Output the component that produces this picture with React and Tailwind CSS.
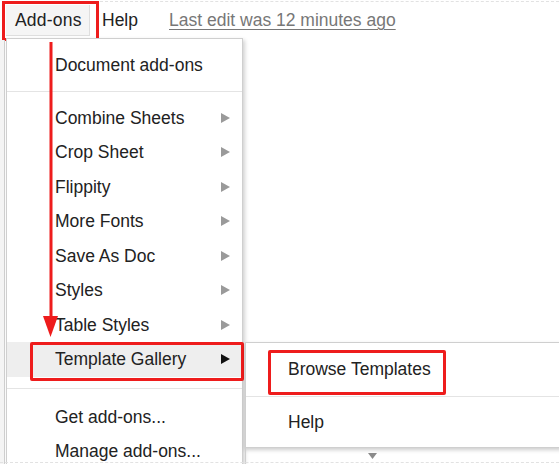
// Google Sheets add-ons menu with red tutorial annotations
const ITEMS = [
  'Combine Sheets',
  'Crop Sheet',
  'Flippity',
  'More Fonts',
  'Save As Doc',
  'Styles',
  'Table Styles',
];

function Caret({ dark }) {
  return (
    <svg width="9" height="10" viewBox="0 0 9 10" className="shrink-0">
      <path d="M0 0 L9 5 L0 10 Z" fill={dark ? '#111' : '#9a9a9a'} />
    </svg>
  );
}

function Row({ label, caret, active, children }) {
  return (
    <div
      className={`relative flex items-center h-[34.5px] pl-[48px] pr-[12px] ${active ? 'bg-[#eeeeee]' : ''}`}
    >
      <span className="flex-1">{label}</span>
      {caret && <Caret dark={active} />}
      {children}
    </div>
  );
}

function Sep({ className = '' }) {
  return <div className={`border-t border-[#e4e4e4] ${className}`} />;
}

export default function App() {
  return (
    <div
      className="relative w-[559px] h-[464px] bg-white overflow-hidden text-[#222] text-[17.5px]"
      style={{ fontFamily: '"Liberation Sans", Arial, sans-serif' }}
    >
      {/* sheet edge on the left */}
      <div className="absolute left-0 top-[40px] bottom-0 w-[5px] bg-[#f4f4f4] border-r border-[#d0d0d0]" />

      {/* faint toolbar edge */}
      <div className="absolute left-[100px] right-0 top-[1px] border-t border-dashed border-[#e2e2e2]" />

      {/* Menu bar */}
      <div className="flex items-center h-[40px]">
        <div className="ml-[2px] mt-[2px] w-[97px] h-[40px] border-[3px] border-[#ee1c1c] pl-[1px] pt-[1px]">
          <div className="h-[31px] w-[84px] bg-[#f5f5f5] border-r border-b border-[#dedede] flex items-center pl-[9px] tracking-[0.2px]">
            Add-ons
          </div>
        </div>
        <span className="ml-[3px]">Help</span>
        <span className="ml-[31px] text-[#777] underline underline-offset-[3px] decoration-[1px]">
          Last edit was 12 minutes ago
        </span>
      </div>

      {/* Add-ons dropdown */}
      <div className="absolute left-[6px] top-[38px] w-[237px] h-[440px] bg-white border-t border-l border-r border-[#cfcfcf] shadow-[2px_2px_4px_rgba(0,0,0,0.18)] pt-[9px]">
        <Row label="Document add-ons" />
        <Sep className="mt-[8px] mb-[9px]" />
        {ITEMS.map((it) => (
          <Row key={it} label={it} caret />
        ))}
        <Row label="Template Gallery" caret active>
          <div className="absolute left-[23px] right-[-2px] top-0 h-[39px] border-[3px] border-[#ee1c1c] rounded-[2px]" />
        </Row>
        <Sep className="mt-[11px] mb-[11px]" />
        <Row label="Get add-ons..." />
        <Row label="Manage add-ons..." />
      </div>

      {/* Red guide arrow */}
      <svg className="absolute left-0 top-0" width="80" height="345" viewBox="0 0 80 345">
        <rect x="49.5" y="42" width="3" height="278" fill="#ee1c1c" />
        <path d="M43 316 L58 316 L50.5 337 Z" fill="#ee1c1c" />
      </svg>

      {/* Template Gallery submenu */}
      <div className="absolute left-[245px] top-[342px] right-[-4px] h-[106px] bg-white border border-[#cfcfcf] shadow-[0_2px_4px_rgba(0,0,0,0.2)]">
        <div className="relative h-[53px] flex items-center pl-[42px]">
          Browse Templates
          <div className="absolute left-[22px] top-[7px] w-[178px] h-[45px] border-[3px] border-[#ee1c1c] rounded-[2px]" />
        </div>
        <Sep />
        <div className="h-[51px] flex items-center pl-[42px]">Help</div>
      </div>

      {/* left border of submenu column continuing down */}
      <div className="absolute left-[245px] top-[448px] bottom-0 border-l border-[#cfcfcf]" />

      {/* scroll hint */}
      <svg className="absolute left-[368px] top-[453px]" width="9" height="6" viewBox="0 0 9 6">
        <path d="M0 0 L9 0 L4.5 6 Z" fill="#8a8a8a" />
      </svg>

      {/* bottom dashed edge */}
      <div className="absolute left-0 right-0 bottom-[1px] border-t border-dashed border-[#e2e2e2]" />
    </div>
  );
}
